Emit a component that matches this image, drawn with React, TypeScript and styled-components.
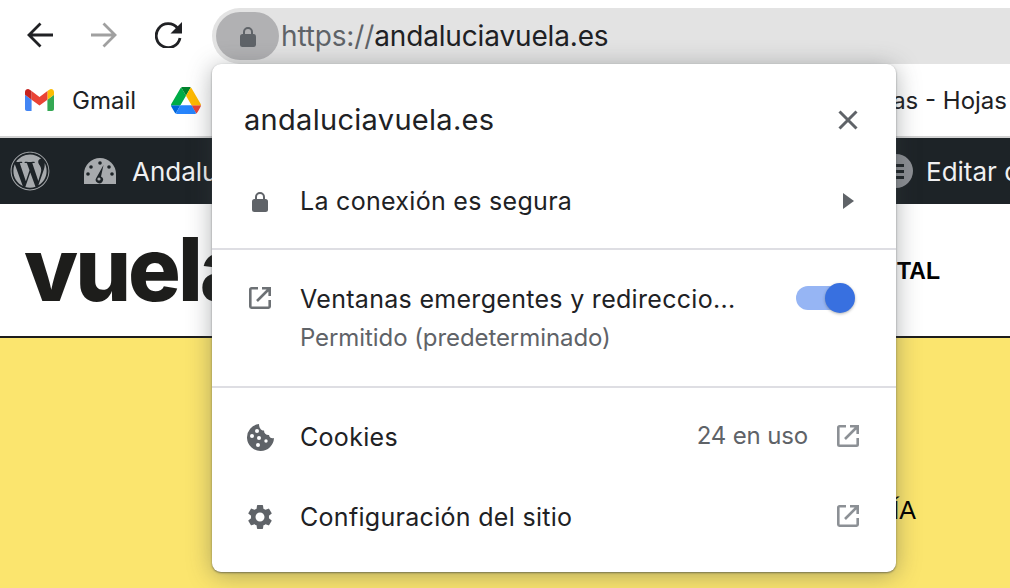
import React from 'react';
import styled, { createGlobalStyle } from 'styled-components';
import { FaWordpress } from 'react-icons/fa';
import { MdSettings } from 'react-icons/md';

const GlobalStyle = createGlobalStyle`
  html, body { margin: 0; padding: 0; background: #fff; }
  body { font-family: 'Inter', 'Liberation Sans', sans-serif; color: #202124; }
  svg { flex: none; }
`;

const Page = styled.div`
  position: relative;
  width: 1010px;
  height: 588px;
  overflow: hidden;
  display: flex;
  flex-direction: column;
  background: #fff;
`;

const Toolbar = styled.div`
  height: 68px;
  flex: none;
  display: flex;
  align-items: flex-start;
  box-sizing: border-box;
  padding: 8px 0 0 27px;
`;

const NavIcons = styled.div`
  display: flex;
  align-items: center;
  gap: 38px;
  height: 54px;
  margin-right: 30px;
`;

const AddressBar = styled.div`
  flex: 1;
  height: 56px;
  margin-right: -30px;
  border-radius: 28px;
  background: #e3e3e3;
  display: flex;
  align-items: center;
  padding-left: 4px;
  font-size: 28px;
  letter-spacing: -0.15px;
  white-space: nowrap;
`;

const LockPill = styled.div`
  width: 63px;
  height: 48px;
  border-radius: 24px;
  background: #b1b1b3;
  display: flex;
  align-items: center;
  justify-content: center;
  margin-right: 2px;
`;

const Scheme = styled.span`
  color: #5f6368;
`;

const Bookmarks = styled.div`
  height: 68px;
  flex: none;
  display: flex;
  align-items: center;
  font-size: 24px;
  white-space: nowrap;
  padding: 0 3px 4px 25px;
  box-sizing: border-box;
`;

const BookmarkLabel = styled.span`
  width: 99px;
  flex: none;
  margin-left: 18px;
`;

const BookmarkEnd = styled.span`
  margin-left: auto;
`;

const AdminBar = styled.div`
  height: 68px;
  flex: none;
  box-sizing: border-box;
  border-top: 2px solid #d2d2d2;
  background: #1d2327;
  color: #f0f0f1;
  display: flex;
  align-items: center;
  padding-left: 10px;
  font-size: 26px;
  white-space: nowrap;
  overflow: hidden;
`;

const GaugeSlot = styled.div`
  margin: 0 16px 0 34px;
  display: flex;
`;

const AdminLeft = styled.span`
  width: 747px;
  flex: none;
`;

const AdminRight = styled.div`
  display: flex;
  align-items: center;
  gap: 13px;
`;

const SiteHeader = styled.div`
  height: 134px;
  flex: none;
  box-sizing: border-box;
  border-bottom: 2px solid #1d1d1b;
  display: flex;
  align-items: center;
  padding-left: 24px;
  white-space: nowrap;
`;

const Logo = styled.span`
  width: 846px;
  flex: none;
  font-size: 88px;
  font-weight: 800;
  letter-spacing: -3px;
  color: #1d1d1b;
  line-height: 1;
  margin-top: -3px;
`;

const HeaderLink = styled.span`
  font-family: 'Liberation Sans', Arial, sans-serif;
  font-size: 23px;
  font-weight: 700;
  color: #000;
  margin: 3px 0 0 27px;
`;

const Hero = styled.div`
  flex: 1;
  background: #fbe56e;
  display: flex;
  justify-content: flex-end;
  padding: 158px 94px 0 0;
  font-family: 'Liberation Sans', Arial, sans-serif;
  font-size: 25px;
  color: #000;
`;

const Popup = styled.div`
  position: absolute;
  left: 212px;
  top: 64px;
  width: 684px;
  height: 508px;
  box-sizing: border-box;
  background: #fff;
  border-radius: 9px;
  box-shadow: 0 1px 2px rgba(60, 64, 67, 0.6), 0 3px 24px rgba(60, 64, 67, 0.4);
  display: flex;
  flex-direction: column;
`;

const PopupHeader = styled.div`
  height: 112px;
  flex: none;
  display: flex;
  align-items: center;
  justify-content: space-between;
  padding: 0 36px 0 32px;
  box-sizing: border-box;
`;

const Domain = styled.div`
  font-size: 29px;
  letter-spacing: 0.3px;
  margin-bottom: 2px;
`;

const Row = styled.div<{ $height: number; $top?: number }>`
  height: ${p => p.$height}px;
  margin-top: ${p => p.$top ?? 0}px;
  flex: none;
  box-sizing: border-box;
  padding: 0 36px 0 30px;
  display: flex;
  align-items: center;
`;

const IconCell = styled.div`
  width: 36px;
  flex: none;
  display: flex;
  justify-content: center;
  margin-right: 22px;
`;

const RowText = styled.div`
  flex: 1;
  font-size: 25px;
  letter-spacing: 0.3px;
  white-space: nowrap;
`;

const SubText = styled.div`
  height: 28px;
  flex: none;
  padding-left: 88px;
  font-size: 24px;
  line-height: 28px;
  letter-spacing: -0.08px;
  color: #5f6368;
`;

const Value = styled.span`
  font-size: 24px;
  letter-spacing: -0.15px;
  color: #5f6368;
  margin: 0 28px 2px 0;
`;

const Divider = styled.div<{ $gap: number }>`
  height: 2px;
  flex: none;
  background: #dedee3;
  margin-top: ${p => p.$gap}px;
`;

const Toggle = styled.div`
  position: relative;
  width: 54px;
  height: 24px;
  margin: 0 10px 2px 0;
  border-radius: 12px;
  background: #96b5f4;
`;

const Thumb = styled.div`
  position: absolute;
  right: -5px;
  top: -3px;
  width: 30px;
  height: 30px;
  border-radius: 50%;
  background: #3870e0;
  box-shadow: 0 1px 3px rgba(60, 64, 67, 0.4);
`;

const AdminCircle = styled.div`
  width: 34px;
  height: 34px;
  border-radius: 50%;
  background: #8c8f94;
  display: flex;
  flex-direction: column;
  align-items: center;
  justify-content: center;
  gap: 3px;
`;

const AdminLine = styled.div`
  width: 16px;
  height: 3px;
  background: #1d2327;
`;

const OpenIcon = styled.svg`
  width: 24px;
  height: 24px;
  margin-bottom: 2px;
`;

const Lock = ({ w, h }: { w: number; h: number }) => (
  <svg width={w} height={h} viewBox="0 0 16 21">
    <path d="M4 9V6a4 4 0 0 1 8 0v3" fill="none" stroke="#5f6368" strokeWidth="2" />
    <rect x="0" y="8" width="16" height="13" rx="2.5" fill="#5f6368" />
  </svg>
);

const OpenNew = ({ color }: { color: string }) => (
  <OpenIcon viewBox="0 0 24 24" fill="none" stroke={color} strokeWidth="2.6">
    <path d="M10 2.3H3.5a1.2 1.2 0 0 0-1.2 1.2v17a1.2 1.2 0 0 0 1.2 1.2h17a1.2 1.2 0 0 0 1.2-1.2V14" />
    <path d="M14 2.3h7.7V10M21.5 2.5 9 15" />
  </OpenIcon>
);

const Gmail = () => (
  <svg width="29" height="22" viewBox="52 42 88 66">
    <path fill="#4285f4" d="M58 108h14V74L52 59v43c0 3.32 2.69 6 6 6" />
    <path fill="#34a853" d="M120 108h14c3.32 0 6-2.69 6-6V59l-20 15" />
    <path fill="#fbbc04" d="M120 48v26l20-15v-8c0-7.42-8.47-11.65-14.4-7.2" />
    <path fill="#ea4335" d="M72 74V48l24 18 24-18v26L96 92" />
    <path fill="#c5221f" d="M52 51v8l20 15V48l-5.6-4.2c-5.94-4.45-14.4-.22-14.4 7.2" />
  </svg>
);

const Drive = () => (
  <svg width="30" height="27" viewBox="0 0 87.3 78">
    <path d="m6.6 66.85 3.85 6.65c.8 1.4 1.95 2.5 3.3 3.3l13.75-23.8h-27.5c0 1.55.4 3.1 1.2 4.5z" fill="#0066da" />
    <path d="m43.65 25-13.75-23.8c-1.35.8-2.5 1.9-3.3 3.3l-25.4 44a9.06 9.06 0 0 0 -1.2 4.5h27.5z" fill="#00ac47" />
    <path d="m73.55 76.8c1.35-.8 2.5-1.9 3.3-3.3l1.6-2.75 7.65-13.25c.8-1.4 1.2-2.95 1.2-4.5h-27.502l5.852 11.5z" fill="#ea4335" />
    <path d="m43.65 25 13.75-23.8c-1.35-.8-2.9-1.2-4.5-1.2h-18.5c-1.6 0-3.15.45-4.5 1.2z" fill="#00832d" />
    <path d="m59.8 53h-32.3l-13.75 23.8c1.35.8 2.9 1.2 4.5 1.2h50.8c1.6 0 3.15-.45 4.5-1.2z" fill="#2684fc" />
    <path d="m73.4 26.5-12.7-22c-.8-1.4-1.95-2.5-3.3-3.3l-13.75 23.8 16.15 28h27.45c0-1.55-.4-3.1-1.2-4.5z" fill="#ffba00" />
  </svg>
);

const Gauge = () => (
  <svg width="32" height="26" viewBox="0 0 32 26">
    <path d="M0 26v-10a16 16 0 0 1 32 0v10z" fill="#a7aaad" />
    <path d="M19.5 7 17 18.5a3.6 3.6 0 1 1-4.6 1.2z" fill="#1d2327" />
    <circle cx="15" cy="21" r="1.6" fill="#a7aaad" />
    <circle cx="16" cy="5" r="1.8" fill="#1d2327" />
    <circle cx="7" cy="9" r="1.8" fill="#1d2327" />
    <circle cx="25" cy="9" r="1.8" fill="#1d2327" />
    <circle cx="4" cy="16" r="1.8" fill="#1d2327" />
    <circle cx="28" cy="16" r="1.8" fill="#1d2327" />
  </svg>
);

const Cookie = () => (
  <svg width="28" height="28" viewBox="0 0 28 28">
    <path d="M13 1a13.5 13.5 0 1 0 15 14c-2.6.6-4.6-.4-5-3-2.8.3-5-1.5-5-4.5-3 .2-5-2.8-5-6.5z" fill="#5f6368" />
    <circle cx="11" cy="8" r="2" fill="#fff" />
    <circle cx="6" cy="13" r="2" fill="#fff" />
    <circle cx="13" cy="15" r="2" fill="#fff" />
    <circle cx="20" cy="18" r="1.7" fill="#fff" />
    <circle cx="12" cy="22" r="2" fill="#fff" />
  </svg>
);

const App: React.FC = () => {
  return (
    <Page>
      <GlobalStyle />
      <Toolbar>
        <NavIcons>
          <svg width="26" height="26" viewBox="0 0 26 26" fill="none" stroke="#202124" strokeWidth="2.8">
            <path d="M26 13H2M13.5 1.5 2 13l11.5 11.5" />
          </svg>
          <svg width="26" height="26" viewBox="0 0 26 26" fill="none" stroke="#a0a0a0" strokeWidth="2.8">
            <path d="M0 13h24M12.5 1.5 24 13 12.5 24.5" />
          </svg>
          <svg width="27" height="26" viewBox="0 0 27 26">
            <path d="M22.5 6A12 12 0 1 0 25 16" fill="none" stroke="#202124" strokeWidth="2.8" />
            <path d="M27 0v11.5H15.5z" fill="#202124" />
          </svg>
        </NavIcons>
        <AddressBar>
          <LockPill>
            <Lock w={16} h={21} />
          </LockPill>
          <span>
            <Scheme>https://</Scheme>andaluciavuela.es
          </span>
        </AddressBar>
      </Toolbar>

      <Bookmarks>
        <Gmail />
        <BookmarkLabel>Gmail</BookmarkLabel>
        <Drive />
        <BookmarkEnd>as - Hojas</BookmarkEnd>
      </Bookmarks>

      <AdminBar>
        <FaWordpress size={40} color="#a7aaad" />
        <GaugeSlot>
          <Gauge />
        </GaugeSlot>
        <AdminLeft>Andalucía Vuela</AdminLeft>
        <AdminRight>
          <AdminCircle>
            <AdminLine />
            <AdminLine />
            <AdminLine />
          </AdminCircle>
          <span>Editar c</span>
        </AdminRight>
      </AdminBar>

      <SiteHeader>
        <Logo>vuela</Logo>
        <HeaderLink>TAL</HeaderLink>
      </SiteHeader>

      <Hero>ÍA</Hero>

      <Popup>
        <PopupHeader>
          <Domain>andaluciavuela.es</Domain>
          <svg width="24" height="24" viewBox="0 0 24 24" stroke="#5f6368" strokeWidth="3" fill="none">
            <path d="M3.5 3.5l17 17M20.5 3.5l-17 17" />
          </svg>
        </PopupHeader>

        <Row $height={50}>
          <IconCell>
            <Lock w={16} h={21} />
          </IconCell>
          <RowText>La conexión es segura</RowText>
          <svg width="14" height="16" viewBox="0 0 14 16" style={{ marginRight: 4 }}>
            <path d="M1 0 12 8 1 16z" fill="#5f6368" />
          </svg>
        </Row>
        <Divider $gap={22} />

        <Row $height={50} $top={24}>
          <IconCell>
            <OpenNew color="#6d7175" />
          </IconCell>
          <RowText>Ventanas emergentes y redireccio...</RowText>
          <Toggle>
            <Thumb />
          </Toggle>
        </Row>
        <SubText>Permitido (predeterminado)</SubText>
        <Divider $gap={34} />

        <Row $height={97}>
          <IconCell>
            <Cookie />
          </IconCell>
          <RowText>Cookies</RowText>
          <Value>24 en uso</Value>
          <OpenNew color="#8c9095" />
        </Row>
        <Row $height={64}>
          <IconCell>
            <MdSettings size={30} color="#5f6368" />
          </IconCell>
          <RowText>Configuración del sitio</RowText>
          <OpenNew color="#8c9095" />
        </Row>
      </Popup>
    </Page>
  );
};

export default App;
